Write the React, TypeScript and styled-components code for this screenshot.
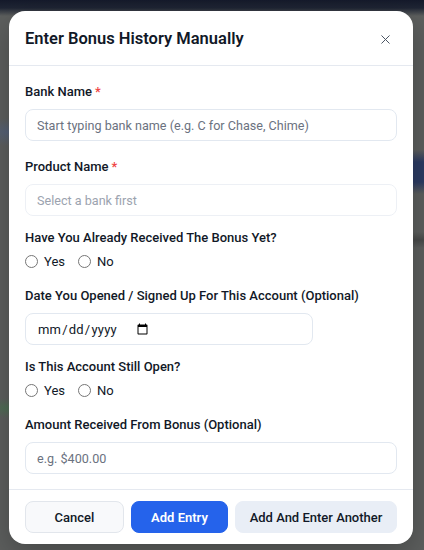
import React from "react";
import styled, { createGlobalStyle } from "styled-components";
import { X } from "lucide-react";

const GlobalStyle = createGlobalStyle`
  html, body { margin: 0; padding: 0; }
  body {
    font-family: Roboto, "Noto Sans", "Liberation Sans", sans-serif;
    color: #111827;
    -webkit-font-smoothing: antialiased;
  }
  * { box-sizing: border-box; }
`;

const Backdrop = styled.div`
  min-height: 100vh;
  padding: 11px 11px 6px 9px;
  background:
    linear-gradient(180deg, #151a2b 0px, #1f2534 8px, rgba(0,0,0,0) 16px),
    radial-gradient(ellipse 30px 14px at 8px 132px, rgba(80,100,140,0.55), rgba(0,0,0,0)),
    radial-gradient(ellipse 22px 10px at 6px 408px, rgba(70,120,80,0.6), rgba(0,0,0,0)),
    linear-gradient(180deg, rgba(0,0,0,0) 150px, #2c3b63 162px, #2c3b63 182px, rgba(0,0,0,0) 194px) right / 14px 100% no-repeat,
    linear-gradient(180deg, rgba(0,0,0,0) 232px, #484a4a 240px, rgba(0,0,0,0) 248px) right / 14px 100% no-repeat,
    #5d5f5e;
`;

const Modal = styled.div`
  width: 404px;
  background: #ffffff;
  border-radius: 16px;
  overflow: hidden;
  box-shadow: 0 10px 30px rgba(0, 0, 0, 0.25);
`;

const Header = styled.div`
  display: flex;
  align-items: center;
  justify-content: space-between;
  padding: 17px 16px 15px 16px;
  border-bottom: 1px solid #e5e9f0;
`;

const Title = styled.h2`
  margin: 0;
  font-size: 16.5px;
  line-height: 22px;
  font-weight: 600;
  color: #111827;
`;

const CloseButton = styled.button`
  border: none;
  background: none;
  padding: 0;
  margin-right: 4px;
  display: flex;
  color: #4b5563;
  cursor: pointer;
`;

const Body = styled.div`
  padding: 16px 16px 15px 16px;
  display: flex;
  flex-direction: column;
  gap: 12px;
`;

const Field = styled.div<{ $extra?: number }>`
  display: flex;
  flex-direction: column;
  margin-bottom: ${(p) => p.$extra ?? 0}px;
`;

const Label = styled.label`
  font-size: 13px;
  line-height: 20px;
  font-weight: 500;
  color: #111827;
  margin-bottom: 7px;
`;

const RadioLabel = styled(Label)`
  margin-bottom: 0;
`;

const Required = styled.span`
  color: #ef4444;
  margin-left: 3px;
`;

const TextInput = styled.input<{ $width?: string }>`
  width: ${(p) => p.$width ?? "100%"};
  height: 32px;
  border: 1px solid #e2e8f0;
  border-radius: 8px;
  padding: 0 11px;
  font-family: inherit;
  font-size: 12.6px;
  color: #111827;
  background: #ffffff;
  outline: none;
  &::placeholder { color: #6b7280; }
  &:disabled { background: #ffffff; border-color: #edf0f5; }
  &:disabled::placeholder { color: #9ca3af; }
`;

const DateInput = styled(TextInput)`
  display: flex;
  font-size: 13px;
  color: #111827;
  letter-spacing: 0.2px;
  &::-webkit-datetime-edit { flex: 0 0 auto; }
  &::-webkit-datetime-edit-fields-wrapper { flex: 0 0 auto; }
  &::-webkit-calendar-picker-indicator { margin-left: -4px; }
`;

const RadioRow = styled.div`
  display: flex;
  align-items: center;
  height: 26px;
  gap: 13px;
`;

const RadioOption = styled.label`
  display: flex;
  align-items: center;
  gap: 6px;
  font-size: 13px;
  color: #111827;
  cursor: pointer;
`;

const Radio = styled.input`
  appearance: none;
  margin: 0;
  width: 13px;
  height: 13px;
  border: 1px solid #767676;
  border-radius: 50%;
  background: #fff;
`;

const Footer = styled.div`
  border-top: 1px solid #e5e9f0;
  padding: 11px 16px 11px 16px;
  display: grid;
  grid-template-columns: 99px 97px 1fr;
  gap: 7px;
`;

const Button = styled.button<{ $variant: "outline" | "primary" | "soft" }>`
  height: 32px;
  border-radius: 8px;
  font-family: inherit;
  font-size: 13px;
  cursor: pointer;
  font-weight: ${(p) => (p.$variant === "primary" ? 600 : 500)};
  color: ${(p) => (p.$variant === "primary" ? "#ffffff" : "#111827")};
  background: ${(p) =>
    p.$variant === "primary" ? "#2563eb" : p.$variant === "soft" ? "#e9eef6" : "#f8f9fb"};
  border: 1px solid
    ${(p) => (p.$variant === "outline" ? "#e2e6ec" : p.$variant === "primary" ? "#2563eb" : "#e9eef6")};
`;

const YesNo: React.FC<{ name: string }> = ({ name }) => (
  <RadioRow>
    <RadioOption>
      <Radio type="radio" name={name} />
      Yes
    </RadioOption>
    <RadioOption>
      <Radio type="radio" name={name} />
      No
    </RadioOption>
  </RadioRow>
);

export default function App() {
  return (
    <>
      <GlobalStyle />
      <Backdrop>
        <Modal>
          <Header>
            <Title>Enter Bonus History Manually</Title>
            <CloseButton aria-label="Close">
              <X size={15} strokeWidth={1.6} />
            </CloseButton>
          </Header>
          <Body>
            <Field $extra={4}>
              <Label>
                Bank Name<Required>*</Required>
              </Label>
              <TextInput placeholder="Start typing bank name (e.g. C for Chase, Chime)" />
            </Field>
            <Field>
              <Label>
                Product Name<Required>*</Required>
              </Label>
              <TextInput placeholder="Select a bank first" disabled />
            </Field>
            <Field>
              <RadioLabel>Have You Already Received The Bonus Yet?</RadioLabel>
              <YesNo name="received" />
            </Field>
            <Field>
              <Label>Date You Opened / Signed Up For This Account (Optional)</Label>
              <DateInput type="date" $width="288px" />
            </Field>
            <Field>
              <RadioLabel>Is This Account Still Open?</RadioLabel>
              <YesNo name="open" />
            </Field>
            <Field>
              <Label>Amount Received From Bonus (Optional)</Label>
              <TextInput placeholder="e.g. $400.00" />
            </Field>
          </Body>
          <Footer>
            <Button $variant="outline">Cancel</Button>
            <Button $variant="primary">Add Entry</Button>
            <Button $variant="soft">Add And Enter Another</Button>
          </Footer>
        </Modal>
      </Backdrop>
    </>
  );
}
